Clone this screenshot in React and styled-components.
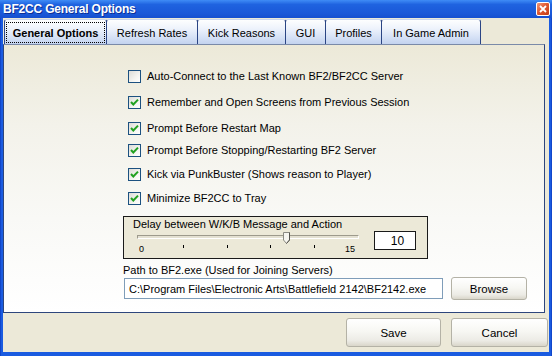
import React from "react";
import styled, { createGlobalStyle } from "styled-components";

const GlobalStyle = createGlobalStyle`
  html, body {
    margin: 0;
    padding: 0;
    background: #ffffff;
  }
  body {
    font-family: "Liberation Sans", Arial, sans-serif;
    font-size: 11px;
    color: #000;
  }
  * {
    box-sizing: border-box;
  }
`;

const Window = styled.div`
  width: 552px;
  height: 356px;
  display: flex;
  flex-direction: column;
  background: linear-gradient(to right, #0831b5 0, #1a5be0 1px, #1a5be0 551px, #0831b5 552px);
  overflow: hidden;
`;

const TitleBar = styled.div`
  height: 18px;
  flex: none;
  display: flex;
  align-items: center;
  justify-content: space-between;
  padding: 0 2px 0 3px;
  background: linear-gradient(#3f8cf6 0%, #1f63e0 25%, #1a58d8 75%, #1650cf 100%);
`;

const Caption = styled.span`
  color: #ffffff;
  font-weight: bold;
  font-size: 12px;
  letter-spacing: -0.2px;
  text-shadow: 1px 1px 0 #0b2f97;
`;

const CloseButton = styled.div`
  width: 14px;
  height: 14px;
  border: 1px solid #ffffff;
  border-radius: 2px;
  background: linear-gradient(135deg, #f19a7c 0%, #e05a32 45%, #c23c15 100%);
  display: flex;
  align-items: center;
  justify-content: center;
`;

const Frame = styled.div`
  flex: 1;
  margin: 0 3px 4px;
  background: #ece9d8;
  display: flex;
  flex-direction: column;
`;

const TabStrip = styled.div`
  height: 26px;
  flex: none;
  display: flex;
  align-items: flex-end;
  padding-left: 1px;
`;

const Tab = styled.div`
  width: ${(p) => p.$w}px;
  height: 25px;
  margin-left: -1px;
  padding: 2px 1px 1px;
  display: flex;
  border: 1px solid #2b4584;
  border-top-color: #c9d6ef;
  border-bottom: none;
  border-radius: 3px 3px 0 0;
  background: linear-gradient(#fdfefe 0%, #eef3fc 35%, #d7e2f6 70%, #c3d3ef 100%);
  &:first-child {
    margin-left: 0;
  }
`;

const TabLabel = styled.div`
  flex: 1;
  display: flex;
  align-items: center;
  justify-content: center;
  font-weight: ${(p) => (p.$active ? "bold" : "normal")};
  border: 1px dotted ${(p) => (p.$active ? "#000" : "transparent")};
  white-space: nowrap;
`;

const Panel = styled.div`
  width: 542px;
  height: 269px;
  flex: none;
  border: 1px solid #2e467c;
  border-top-color: #7a8aa8;
  background: linear-gradient(#ece9d8 0%, #f3f2ea 30%, #f9f9f6 65%, #ffffff 100%);
  padding: 25px 0 0 119px;
  display: flex;
  flex-direction: column;
  align-items: flex-start;
`;

const CheckList = styled.div`
  margin-left: 5px;
  display: flex;
  flex-direction: column;
`;

const CheckRow = styled.label`
  height: 13px;
  margin-top: ${(p) => p.$space}px;
  display: flex;
  align-items: center;
  gap: 6px;
  line-height: 13px;
  white-space: nowrap;
`;

const Box = styled.span`
  width: 13px;
  height: 13px;
  flex: none;
  border: 1px solid #1c5180;
  background: linear-gradient(135deg, #dcdcd7 0%, #f4f4f0 60%, #ffffff 100%);
  display: flex;
  align-items: center;
  justify-content: center;
`;

const GroupBox = styled.div`
  width: 305px;
  height: 43px;
  margin-top: 11px;
  border: 1px solid #1a1a1a;
  background: #ece9d8;
  padding: 0 0 0 9px;
  display: flex;
  flex-direction: column;
`;

const GroupTitle = styled.div`
  line-height: 13px;
  margin-top: 1px;
  white-space: nowrap;
`;

const GroupRow = styled.div`
  display: flex;
  align-items: flex-start;
  margin-top: -1px;
`;

const Slider = styled.div`
  position: relative;
  width: 233px;
  height: 27px;
  flex: none;
`;

const Track = styled.div`
  position: absolute;
  left: 4px;
  top: 5px;
  width: 222px;
  height: 4px;
  border-top: 1px solid #9d9a8c;
  border-left: 1px solid #9d9a8c;
  border-bottom: 1px solid #ffffff;
  border-right: 1px solid #ffffff;
  background: #e4e1d2;
`;

const Thumb = styled.svg`
  position: absolute;
  top: 2px;
`;

const Tick = styled.div`
  position: absolute;
  top: 15px;
  width: 1px;
  height: 3px;
  background: #000;
`;

const ScaleText = styled.span`
  position: absolute;
  top: 14px;
  font-size: 9px;
  line-height: 11px;
`;

const NumBox = styled.div`
  width: 42px;
  height: 19px;
  margin: 1px 0 0 8px;
  border: 1px solid #1a1a1a;
  background: #ffffff;
  display: flex;
  align-items: center;
  justify-content: center;
  padding-left: 5px;
  font-size: 12px;
`;

const PathLabel = styled.div`
  margin-top: 5px;
  line-height: 13px;
  white-space: nowrap;
`;

const PathRow = styled.div`
  display: flex;
  align-items: center;
  margin-top: 0;
`;

const TextBox = styled.div`
  width: 319px;
  height: 21px;
  margin-left: 1px;
  border: 1px solid #7f9db9;
  background: #ffffff;
  padding: 0 4px;
  display: flex;
  align-items: center;
  white-space: nowrap;
  overflow: hidden;
  font-size: 11px;
`;

const Button = styled.div`
  width: ${(p) => p.$w}px;
  height: ${(p) => p.$h}px;
  margin-left: ${(p) => p.$ml || 0}px;
  flex: none;
  border: 1px solid #b4b2a6;
  border-radius: 3px;
  background: linear-gradient(#ffffff 0%, #f7f7f3 45%, #ecebe5 80%, #d9d6ca 100%);
  display: flex;
  align-items: center;
  justify-content: center;
  font-size: 11.5px;
`;

const Footer = styled.div`
  flex: 1;
  display: flex;
  align-items: center;
  justify-content: flex-end;
  gap: 10px;
  padding-right: 1px;
`;

const tabs = [
  { label: "General Options", w: 103, active: true },
  { label: "Refresh Rates", w: 92 },
  { label: "Kick Reasons", w: 89 },
  { label: "GUI", w: 41 },
  { label: "Profiles", w: 57 },
  { label: "In Game Admin", w: 100 },
];

const options = [
  { text: "Auto-Connect to the Last Known BF2/BF2CC Server", checked: false, space: 0 },
  { text: "Remember and Open Screens from Previous Session", checked: true, space: 13 },
  { text: "Prompt Before Restart Map", checked: true, space: 13 },
  { text: "Prompt Before Stopping/Restarting BF2 Server", checked: true, space: 9 },
  { text: "Kick via PunkBuster (Shows reason to Player)", checked: true, space: 11 },
  { text: "Minimize BF2CC to Tray", checked: true, space: 11 },
];

// trackbar scale: 0..15, ticks every 3
const SCALE_LEFT = 6;
const SCALE_WIDTH = 219;
const delay = 10;
const pos = (v) => SCALE_LEFT + (v / 15) * SCALE_WIDTH;

function Check({ checked }) {
  return (
    <Box>
      {checked && (
        <svg width="9" height="9" viewBox="0 0 9 9">
          <path d="M1 4 L3.3 6.5 L8 1.6" fill="none" stroke="#21a121" strokeWidth="2" />
        </svg>
      )}
    </Box>
  );
}

export default function App() {
  return (
    <>
      <GlobalStyle />
      <Window>
        <TitleBar>
          <Caption>BF2CC General Options</Caption>
          <CloseButton>
            <svg width="8" height="8" viewBox="0 0 8 8">
              <path d="M1 1 L7 7 M7 1 L1 7" stroke="#fff" strokeWidth="1.8" />
            </svg>
          </CloseButton>
        </TitleBar>
        <Frame>
          <TabStrip>
            {tabs.map((t) => (
              <Tab key={t.label} $w={t.w}>
                <TabLabel $active={t.active}>{t.label}</TabLabel>
              </Tab>
            ))}
          </TabStrip>
          <Panel>
            <CheckList>
              {options.map((o) => (
                <CheckRow key={o.text} $space={o.space}>
                  <Check checked={o.checked} />
                  {o.text}
                </CheckRow>
              ))}
            </CheckList>
            <GroupBox>
              <GroupTitle>Delay between W/K/B Message and Action</GroupTitle>
              <GroupRow>
                <Slider>
                  <Track />
                  {[3, 6, 9, 12].map((v) => (
                    <Tick key={v} style={{ left: Math.round(pos(v)) }} />
                  ))}
                  <ScaleText style={{ left: SCALE_LEFT }}>0</ScaleText>
                  <ScaleText style={{ left: 212 }}>15</ScaleText>
                  <Thumb
                    width="7"
                    height="12"
                    viewBox="0 0 7 12"
                    style={{ left: Math.round(pos(delay)) - 2 }}
                  >
                    <path d="M0.5 0.5 H6.5 V8 L3.5 11.5 L0.5 8 Z" fill="#f6f5ef" stroke="#8b8a82" />
                    <path d="M6.5 0.5 V8 L3.5 11.5" fill="none" stroke="#55544e" />
                  </Thumb>
                </Slider>
                <NumBox>{delay}</NumBox>
              </GroupRow>
            </GroupBox>
            <PathLabel>Path to BF2.exe (Used for Joining Servers)</PathLabel>
            <PathRow>
              <TextBox>C:\Program Files\Electronic Arts\Battlefield 2142\BF2142.exe</TextBox>
              <Button $w={76} $h={23} $ml={8}>
                Browse
              </Button>
            </PathRow>
          </Panel>
          <Footer>
            <Button $w={95} $h={29}>
              Save
            </Button>
            <Button $w={97} $h={29}>
              Cancel
            </Button>
          </Footer>
        </Frame>
      </Window>
    </>
  );
}
